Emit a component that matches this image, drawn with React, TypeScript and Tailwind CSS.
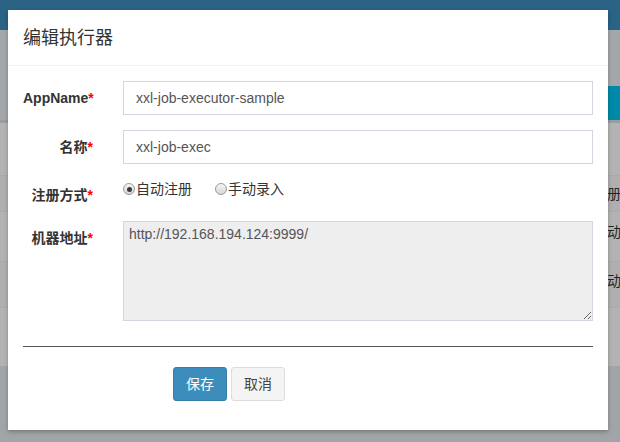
import React from "react";

const font = "font-['Liberation_Sans','Noto_Sans_CJK_SC',sans-serif]";

function Label({ text, pt = "pt-[7px]" }: { text: string; pt?: string }) {
  return (
    <div className={`w-[70px] shrink-0 text-right text-[14px] leading-[20px] font-bold text-[#333] ${pt}`}>
      {text}
      <span className="text-[#ff0000]">*</span>
    </div>
  );
}

function Radio({ label, checked }: { label: string; checked?: boolean }) {
  return (
    <label className="flex items-center text-[14px] leading-[20px] text-[#333]">
      <span className="w-[12px] h-[12px] rounded-full border border-[#9a9a9a] bg-gradient-to-b from-[#f6f6f6] to-[#d6d6d6] flex items-center justify-center">
        {checked && <span className="w-[5px] h-[5px] rounded-full bg-[#3a3a3a]" />}
      </span>
      <span className="ml-[1px]">{label}</span>
    </label>
  );
}

export default function App() {
  return (
    <div className={`relative w-[620px] h-[442px] overflow-hidden bg-[#a1a5a8] ${font}`}>
      {/* dimmed page behind the modal */}
      <div className="h-[30px] bg-[#2b6385]" />
      <div className="h-[56px] bg-[#a4a7aa]" />
      <div className="h-[34px] bg-[#a4a7aa] flex justify-end">
        <div className="w-[90px] bg-[#0089a8]" />
      </div>
      <div className="border-t-[3px] border-[#9a9c9e] bg-[#b3b3b3]">
        <div className="h-[52px]" />
        <div className="h-[36px] border-t border-[#aaaaaa] bg-[#afafaf] relative overflow-hidden">
          <span className="absolute left-[593px] top-[8px] text-[14px] leading-[20px] text-[#242424] whitespace-nowrap">注册方式</span>
        </div>
        <div className="h-[50px] border-t border-[#aaaaaa] relative overflow-hidden">
          <span className="absolute left-[593px] top-[10px] text-[14px] leading-[20px] text-[#242424] whitespace-nowrap">自动注册</span>
        </div>
        <div className="h-[46px] border-t border-[#aaaaaa] bg-[#afafaf] relative overflow-hidden">
          <span className="absolute left-[593px] top-[9px] text-[14px] leading-[20px] text-[#242424] whitespace-nowrap">自动注册</span>
        </div>
        <div className="h-[59px] border-t border-[#aaaaaa]" />
      </div>

      {/* modal */}
      <div className="absolute left-[8px] top-[10px] w-[600px] h-[420px] bg-white shadow-[0_2px_4px_rgba(0,0,0,0.25)]">
        <div className="h-[56px] px-[15px] flex items-center border-b border-[#f2f2f2]">
          <h4 className="text-[18px] leading-[26px] text-[#333]">编辑执行器</h4>
        </div>

        <div className="px-[15px] pt-[15px]">
          <div className="flex">
            <Label text="AppName" />
            <input
              readOnly
              value="xxl-job-executor-sample"
              className="ml-[30px] w-[470px] h-[34px] border border-[#d2d6de] px-[12px] text-[14px] text-[#555] outline-none"
            />
          </div>

          <div className="flex mt-[15px]">
            <Label text="名称" />
            <input
              readOnly
              value="xxl-job-exec"
              className="ml-[30px] w-[470px] h-[34px] border border-[#d2d6de] px-[12px] text-[14px] text-[#555] outline-none"
            />
          </div>

          <div className="flex mt-[15px] h-[42px]">
            <Label text="注册方式" pt="pt-[6px]" />
            <div className="ml-[30px] flex items-start gap-[23px]">
              <Radio label="自动注册" checked />
              <Radio label="手动录入" />
            </div>
          </div>

          <div className="flex">
            <Label text="机器地址" />
            <textarea
              readOnly
              defaultValue="http://192.168.194.124:9999/"
              className="ml-[30px] w-[470px] h-[100px] border border-[#d2d6de] bg-[#eeeeee] px-[5px] py-[2px] text-[14px] leading-[20px] text-[#555] outline-none"
            />
          </div>

          <div className="mt-[25px] h-px bg-[#555]" />

          <div className="mt-[20px] ml-[150px] flex gap-[4px]">
            <button className="h-[34px] px-[12px] rounded-[3px] border border-[#367fa9] bg-[#3c8dbc] text-white text-[14px]">
              保存
            </button>
            <button className="h-[34px] px-[12px] rounded-[3px] border border-[#dddddd] bg-[#f4f4f4] text-[#444] text-[14px]">
              取消
            </button>
          </div>
        </div>
      </div>
    </div>
  );
}
